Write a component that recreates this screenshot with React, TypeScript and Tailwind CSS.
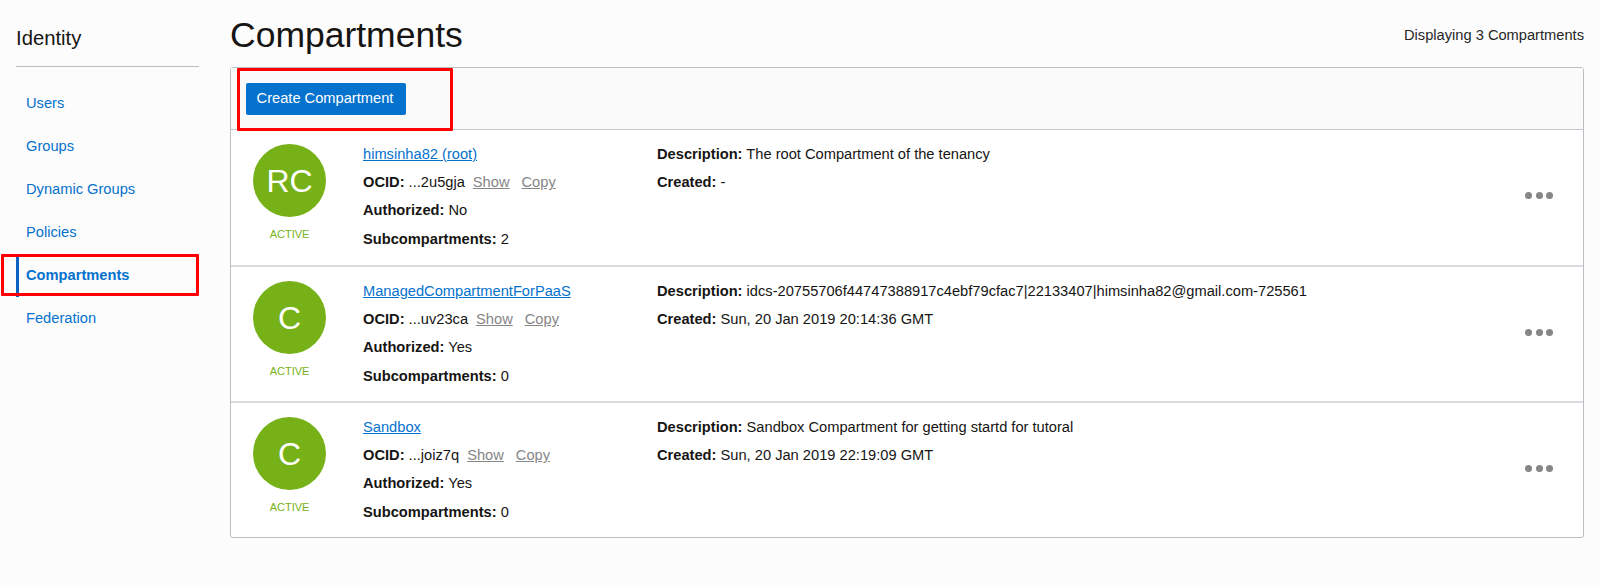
const navItems = ["Users", "Groups", "Dynamic Groups", "Policies", "Compartments", "Federation"];

const rows = [
  {
    initials: "RC",
    name: "himsinha82 (root)",
    ocid: "...2u5gja",
    authorized: "No",
    subs: 2,
    description: "The root Compartment of the tenancy",
    created: "-",
    rowClass: "h-[137px] border-b-2 border-[#d9dbde]",
  },
  {
    initials: "C",
    name: "ManagedCompartmentForPaaS",
    ocid: "...uv23ca",
    authorized: "Yes",
    subs: 0,
    description: "idcs-20755706f44747388917c4ebf79cfac7|22133407|himsinha82@gmail.com-725561",
    created: "Sun, 20 Jan 2019 20:14:36 GMT",
    rowClass: "h-[136px] border-b-2 border-[#d9dbde]",
  },
  {
    initials: "C",
    name: "Sandbox",
    ocid: "...joiz7q",
    authorized: "Yes",
    subs: 0,
    description: "Sandbox Compartment for getting startd for tutoral",
    created: "Sun, 20 Jan 2019 22:19:09 GMT",
    rowClass: "h-[134px]",
  },
];

export default function App() {
  return (
    <div className="flex h-[585px] w-[1600px] overflow-hidden bg-[#fcfcfc] font-['Liberation_Sans',Arial,sans-serif] text-[14.67px] text-[#161513]">
      {/* Sidebar */}
      <aside className="relative ml-4 w-[183px] shrink-0">
        <h2 className="flex h-[67px] items-end border-b border-[#b9bdc4] pb-[16px] text-[20.3px] leading-6">Identity</h2>
        <nav className="mt-[14px] flex flex-col">
          {navItems.map((item) => (
            <a
              key={item}
              className={`flex h-[43px] items-center text-[#0572ce] ${
                item === "Compartments"
                  ? "mt-px -mb-px border-l-[3px] border-[#0b62c4] pb-[2px] pl-[7px] font-bold"
                  : "pl-[10px]"
              }`}
            >
              {item}
            </a>
          ))}
        </nav>
        {/* Annotation */}
        <div className="absolute left-[-15px] top-[254px] h-[42px] w-[198px] rounded-[1px] border-[3px] border-[#ff0000]" />
      </aside>

      {/* Main */}
      <main className="ml-[31px] w-[1354px] shrink-0">
        <div className="flex h-[67px] items-start justify-between">
          <h1 className="mt-[13px] text-[35.5px] leading-[44px]">Compartments</h1>
          <span className="mt-[27px] leading-4 text-[#262626]">Displaying 3 Compartments</span>
        </div>

        <div className="relative rounded-[3px] border border-[#b9bdc4] bg-white">
          <div className="flex h-[62px] items-center border-b border-[#c4c8ce] bg-[#fafafa] pl-[15px]">
            <button className="h-8 w-[160px] rounded-[2px] bg-[#0572ce] pb-[2px] pr-[2px] text-white">Create Compartment</button>
          </div>
          {/* Annotation */}
          <div className="absolute left-[6px] top-0 h-[63px] w-[216px] rounded-[1px] border-[3px] border-[#ff0000]" />

          {rows.map((row) => (
            <div key={row.name} className={`flex ${row.rowClass}`}>
              <div className="ml-[22px] mt-[14px] flex w-[73px] shrink-0 flex-col items-center">
                <div className="flex h-[73px] w-[73px] items-center justify-center rounded-full bg-[#76b117] text-[32px] text-white">
                  {row.initials}
                </div>
                <span className="mt-[10px] text-[11px] leading-[14px] text-[#76b117]">ACTIVE</span>
              </div>

              <div className="ml-[37px] mt-[10px] w-[294px] shrink-0 leading-[28.2px]">
                <a className="text-[#0572ce] underline">{row.name}</a>
                <div>
                  <b>OCID:</b> {row.ocid}
                  <a className="ml-[8px] text-[#868686] underline">Show</a>
                  <a className="ml-[12px] text-[#868686] underline">Copy</a>
                </div>
                <div>
                  <b>Authorized:</b> {row.authorized}
                </div>
                <div>
                  <b>Subcompartments:</b> {row.subs}
                </div>
              </div>

              <div className="mt-[10px] flex-1 leading-[28.2px]">
                <div>
                  <b>Description:</b> {row.description}
                </div>
                <div>
                  <b>Created:</b> {row.created}
                </div>
              </div>

              <div className="mr-[30px] mt-[62px] flex h-[7px] items-center gap-[3.5px]">
                <span className="h-[7px] w-[7px] rounded-full bg-[#868686]" />
                <span className="h-[7px] w-[7px] rounded-full bg-[#868686]" />
                <span className="h-[7px] w-[7px] rounded-full bg-[#868686]" />
              </div>
            </div>
          ))}
        </div>
      </main>
    </div>
  );
}
